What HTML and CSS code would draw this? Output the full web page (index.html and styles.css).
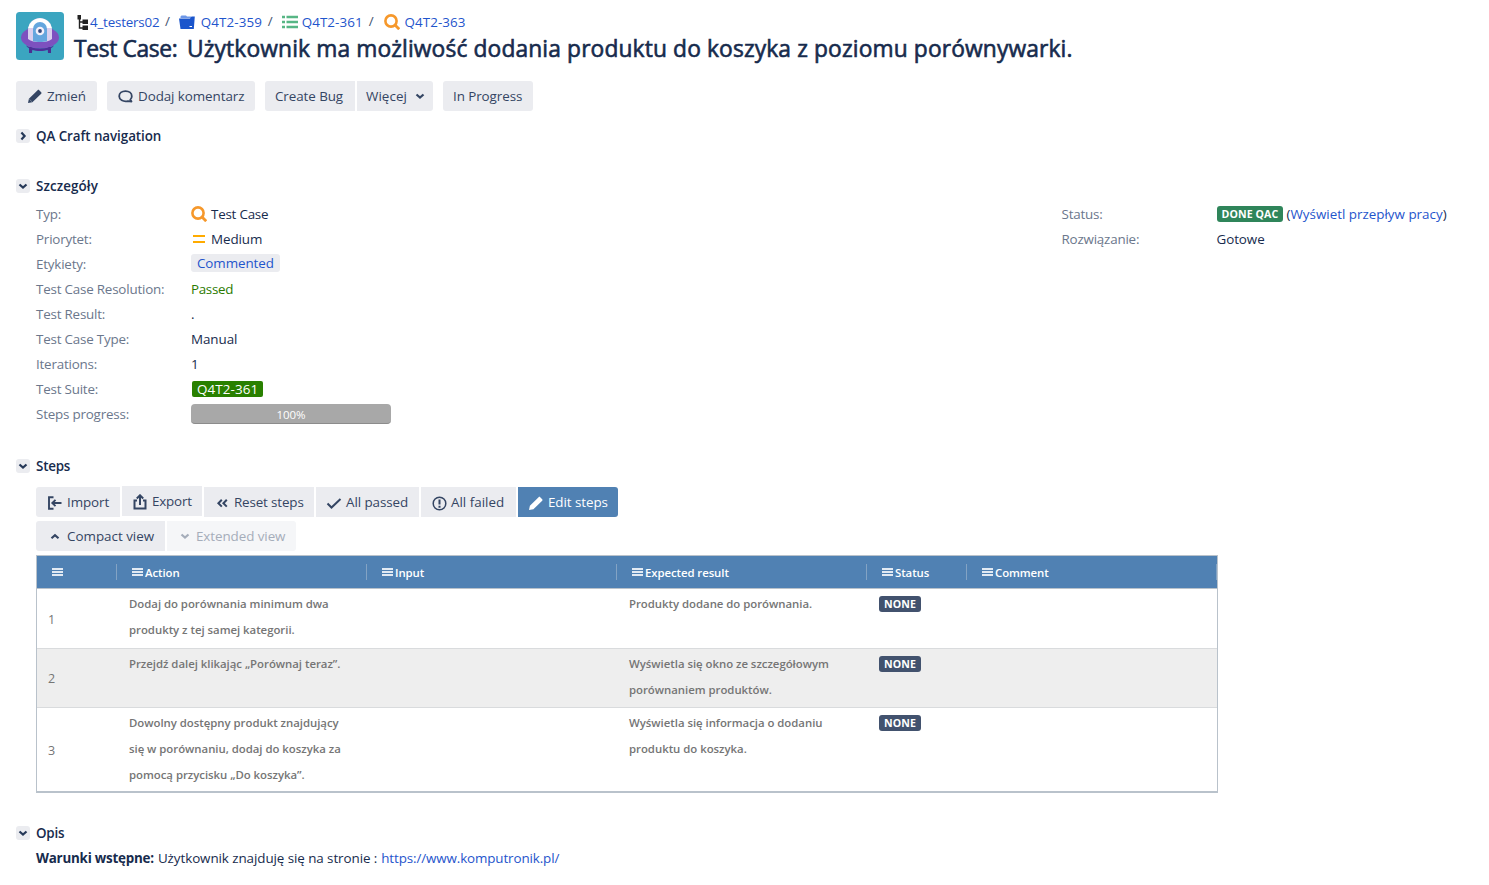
FILE: index.html
```html
<!DOCTYPE html>
<html lang="pl">
<head>
<meta charset="utf-8">
<title>Q4T2-363</title>
<link rel="stylesheet" href="styles.css">
</head>
<body>
<svg class="sprite" width="0" height="0">
  <defs>
    <symbol id="search" viewBox="0 0 16 16"><circle cx="7" cy="7" r="5.600" fill="none" stroke="#f6982b" stroke-width="2.600"/><path d="M11 11l4.200 4.200" stroke="#f6982b" stroke-width="2.800"/></symbol>
    <symbol id="down" viewBox="0 0 14 14"><path d="M3.500 5.500L7 8.600l3.500-3.100" fill="none" stroke="currentColor" stroke-width="2.200"/></symbol>
    <symbol id="pencil" viewBox="0 0 16 16"><path d="M1 15l.9-4.300L10.600 2.200c.5-.5 1.100-.5 1.600 0l2 2c.5.500.5 1.100 0 1.600L5.400 14.200z" fill="currentColor"/><path d="M2.300 11.200l2.800 2.700" stroke="#fff" stroke-opacity=".45" stroke-width=".7"/></symbol>
    <symbol id="bars" viewBox="0 0 11 8"><path d="M0 1h11M0 4h11M0 7h11" stroke="currentColor" stroke-width="2"/></symbol>
  </defs>
</svg>
<header class="head">
  <svg class="avatar" viewBox="0 0 48 48"><rect width="48" height="48" rx="3.500" fill="#3ba5c0"/><path d="M13 35h3.500l-.5 6h-3zM31.500 35H35v6h-3z" fill="#4a2f92"/><ellipse cx="24" cy="25.500" rx="19" ry="11" fill="#7d51bf"/><path d="M10 33.500C13 35.500 18 36.500 24 36.500s11-1 14-3C35 37.500 30 39 24 39s-11-1.500-14-5.500z" fill="#4f2f9a"/><path d="M12 27V18a12 12 0 0 1 24 0v9c-3 2.500-7 3-12 3s-9-.5-12-3z" fill="#d9cfee"/><path d="M12.200 16a12 12 0 0 1 23.600 0z" fill="#fff"/><path d="M17 29.200V17a7 7 0 0 1 14 0v12.200c-4 1-10 1-14 0z" fill="#64a6de"/><circle cx="24" cy="19" r="4.300" fill="#f3f0fa"/><circle cx="24" cy="19" r="1.900" fill="#344a80"/></svg>
  <div class="headtext">
    <nav class="crumbs">
      <svg class="tree" viewBox="0 0 12 16"><path d="M2.500 1v12h6M2.500 7h6" fill="none" stroke="#222" stroke-width="1.400"/><path d="M.5 0H4v4.500H.5zM5.500 4.500H11V9H5.500zM5.500 10.500H11V15H5.500z" fill="#222"/></svg>
      <a class="c1">4_testers02</a><i>/</i>
      <svg class="ic-folder" viewBox="0 0 16 14"><path d="M1.500 3V1.500l1-1H7l1 1h4V3z" fill="#6d97e8"/><path d="M0 3.500h11l1.500-2h3.300L14.800 14H1.500z" fill="#1a55cc"/><path d="M10.500 11.500h2.500" stroke="#fff"/></svg>
      <a class="c2">Q4T2-359</a><i>/</i>
      <svg class="ic-list" viewBox="0 0 16 14"><path d="M0 2h3M0 7h3M0 12h3M4.500 2H16M4.500 7H16M4.500 12H16" stroke="#57b685" stroke-width="2.600"/></svg>
      <a class="c3">Q4T2-361</a><i>/</i>
      <svg class="ic-search"><use href="#search"/></svg>
      <a class="c4">Q4T2-363</a>
    </nav>
    <h1><span class="t1">Test Case:</span><span class="t2">Użytkownik ma możliwość dodania produktu do koszyka z poziomu porównywarki.</span></h1>
  </div>
</header>
<div class="toolbar">
  <button class="btn b-edit"><svg class="i16"><use href="#pencil"/></svg><span>Zmień</span></button>
  <button class="btn b-comment"><svg class="i16" viewBox="0 0 16 16"><path d="M9.800 13.100C5 14 1.200 11.700 1.200 8.200c0-3 2.700-5 6.300-5s6.300 2 6.300 5c0 1.300-.5 2.500-1.500 3.400l1.200 1.900z" fill="none" stroke="currentColor" stroke-width="1.800" stroke-linejoin="round"/></svg><span>Dodaj komentarz</span></button>
  <div class="group"><button class="btn b-bug"><span>Create Bug</span></button><button class="btn b-more"><span>Więcej</span><svg class="i14"><use href="#down"/></svg></button></div>
  <button class="btn b-prog"><span>In Progress</span></button>
</div>
<h2 class="h-nav"><span class="toggle"><svg viewBox="0 0 14 14"><path d="M5.400 3.500L8.600 7l-3.200 3.500" fill="none" stroke="currentColor" stroke-width="2.200"/></svg></span><span>QA Craft navigation</span></h2>
<h2 class="h-details"><span class="toggle"><svg><use href="#down"/></svg></span><span class="wide">Szczegóły</span></h2>
<div class="details">
  <dl class="main">
    <dt>Typ:</dt><dd><svg class="i16 drop"><use href="#search"/></svg><span class="ml tight">Test Case</span></dd>
    <dt>Priorytet:</dt><dd><svg class="i16 drop" viewBox="0 0 16 16"><path d="M2 5h12M2 11h12" stroke="#ffab00" stroke-width="2"/></svg><span class="ml">Medium</span></dd>
    <dt>Etykiety:</dt><dd><a class="label">Commented</a></dd>
    <dt>Test Case Resolution:</dt><dd class="green"><span>Passed</span></dd>
    <dt>Test Result:</dt><dd>.</dd>
    <dt>Test Case Type:</dt><dd>Manual</dd>
    <dt>Iterations:</dt><dd>1</dd>
    <dt>Test Suite:</dt><dd><span class="suite">Q4T2-361</span></dd>
    <dt>Steps progress:</dt><dd><div class="progress">100%</div></dd>
  </dl>
  <dl class="side">
    <dt>Status:</dt><dd><b class="lozenge done">DONE QAC</b><span class="flow">(<a>Wyświetl przepływ pracy</a>)</span></dd>
    <dt>Rozwiązanie:</dt><dd>Gotowe</dd>
  </dl>
</div>
<h2 class="h-steps"><span class="toggle"><svg><use href="#down"/></svg></span><span class="tight">Steps</span></h2>
<div class="stepbar">
  <button class="btn s1"><svg class="i16" viewBox="0 0 16 16"><path d="M6.500 2.200H2v11.600h4.500M5 8h9.500M8.500 4.800L5.300 8l3.200 3.200" fill="none" stroke="currentColor" stroke-width="1.900"/></svg><span>Import</span></button>
  <button class="btn s2"><svg class="i16" viewBox="0 0 16 16"><path d="M5 6.500H2.500v8h11v-8H11M8 11V1.500M4.800 4.500L8 1.300l3.200 3.200" fill="none" stroke="currentColor" stroke-width="2"/></svg><span>Export</span></button>
  <button class="btn s3"><svg class="i16" viewBox="0 0 16 16"><path d="M7.800 4.800L4.400 8.200l3.400 3.400M12.800 4.800L9.400 8.200l3.400 3.400" fill="none" stroke="currentColor" stroke-width="2"/></svg><span>Reset steps</span></button>
  <button class="btn s4"><svg class="i16" viewBox="0 0 16 16"><path d="M1.500 8.500l4 4 9-8.500" fill="none" stroke="currentColor" stroke-width="2"/></svg><span>All passed</span></button>
  <button class="btn s5"><svg class="i16" viewBox="0 0 16 16"><circle cx="8.500" cy="8.500" r="6.300" fill="none" stroke="currentColor" stroke-width="1.500"/><path d="M8.500 4.500v5M8.500 10.700v2" stroke="currentColor" stroke-width="2"/></svg><span>All failed</span></button>
  <button class="btn s6"><svg class="i16"><use href="#pencil"/></svg><span>Edit steps</span></button>
</div>
<div class="viewbar">
  <button class="btn v1"><svg class="i14" viewBox="0 0 14 14"><path d="M3.500 9.200L7 6.100l3.500 3.100" fill="none" stroke="currentColor" stroke-width="2.200"/></svg><span>Compact view</span></button>
  <button class="btn v2"><svg class="i14"><use href="#down"/></svg><span>Extended view</span></button>
</div>
<div class="grid">
  <div class="row ghead">
    <div><svg><use href="#bars"/></svg></div>
    <div><svg><use href="#bars"/></svg><span>Action</span></div>
    <div><svg><use href="#bars"/></svg><span>Input</span></div>
    <div><svg><use href="#bars"/></svg><span>Expected result</span></div>
    <div><svg><use href="#bars"/></svg><span>Status</span></div>
    <div><svg><use href="#bars"/></svg><span>Comment</span></div>
  </div>
  <div class="row r1"><div class="num">1</div><div>Dodaj do porównania minimum dwa<br>produkty z tej samej kategorii.</div><div></div><div>Produkty dodane do porównania.</div><div><b class="lozenge none">NONE</b></div><div></div></div>
  <div class="row r2"><div class="num">2</div><div>Przejdź dalej klikając „Porównaj teraz”.</div><div></div><div>Wyświetla się okno ze szczegółowym<br>porównaniem produktów.</div><div><b class="lozenge none">NONE</b></div><div></div></div>
  <div class="row r3"><div class="num">3</div><div>Dowolny dostępny produkt znajdujący<br>się w porównaniu, dodaj do koszyka za<br>pomocą przycisku „Do koszyka”.</div><div></div><div>Wyświetla się informacja o dodaniu<br>produktu do koszyka.</div><div><b class="lozenge none">NONE</b></div><div></div></div>
</div>
<h2 class="h-desc"><span class="toggle"><svg><use href="#down"/></svg></span><span class="tight">Opis</span></h2>
<p class="desc"><b>Warunki wstępne:</b><span>Użytkownik znajduję się na stronie :</span><a>https://www.komputronik.pl/</a></p>
</body>
</html>
```
FILE: styles.css
```css
* { box-sizing: border-box; }
body { margin: 0; padding: 12px 16px 0; height: 885px; overflow: hidden; background: #fff; color: #172b4d; font: 13.4px/20px "Open Sans", "Noto Sans", sans-serif; letter-spacing: -0.07px; }
h1, h2, dl, dd, p { margin: 0; }
a { color: #1f55cc; white-space: nowrap; }
span, b { white-space: nowrap; }
svg { display: block; flex: none; }
.sprite { position: absolute; }
.tight { letter-spacing: -0.22px; }
.wide { letter-spacing: 0.1px; }

.head { display: flex; height: 48px; }
.avatar { width: 48px; height: 48px; }
.headtext { margin-left: 12px; }
.crumbs { display: flex; align-items: center; height: 20px; }
.crumbs i { font-style: normal; color: #42526e; margin: -3px 0 0 5px; }
.tree { width: 12px; height: 16px; margin: 2px 1px 0 1px; }
.c1 { width: 70px; letter-spacing: -0.2px; }
.c2, .c3, .c4 { width: 62px; letter-spacing: 0.08px; }
.ic-folder { width: 16px; height: 14px; margin: 0 6px 0 9px; }
.ic-list { width: 16px; height: 14px; margin: 0 4px 0 9px; }
.ic-search { width: 16px; height: 16px; margin: 0 5px 0 10px; }
h1 { display: flex; margin-top: 1px; font-size: 22.8px; font-weight: 400; line-height: 31px; -webkit-text-stroke: 0.6px #172b4d; letter-spacing: 0.12px; }
.t1 { width: 113px; margin-left: -2px; letter-spacing: -0.35px; }

.btn { display: flex; align-items: center; height: 30px; padding: 0; border: 0; border-radius: 3px; background: #ebecf0; color: #344563; font: inherit; letter-spacing: inherit; }
.i16 { width: 16px; height: 16px; }
.drop { margin-top: 1px; }
.i14 { width: 14px; height: 14px; }
.toolbar { display: flex; gap: 10px; margin-top: 21px; }
.group { display: flex; gap: 2px; }
.b-edit { width: 81px; padding-left: 11px; gap: 4px; }
.b-comment { width: 148px; padding-left: 11px; gap: 4px; }
.b-bug { width: 90px; padding-left: 10px; border-radius: 3px 0 0 3px; }
.b-more { width: 76px; padding-left: 9px; gap: 6px; border-radius: 0 3px 3px 0; letter-spacing: 0.05px; }
.b-prog { width: 90px; padding-left: 10px; }

h2 { display: flex; align-items: center; gap: 6px; height: 20px; font-size: 13.4px; font-weight: 600; }
.toggle { width: 14px; height: 14px; border-radius: 3px; background: #ebecf0; color: #253858; }
.toggle svg { width: 14px; height: 14px; }
.h-nav { margin-top: 15px; }
.h-details { margin-top: 30px; }

.details { display: flex; padding: 5px 0 0 20px; height: 231px; }
.details dl { display: grid; grid-auto-rows: 25px; align-items: center; align-content: start; flex: none; }
.details .main { grid-template-columns: 155px 870px; }
.details .side { grid-template-columns: 155px 240px; margin-left: 0.5px; }
dt { color: #6b778c; letter-spacing: -0.2px; }
dd { display: flex; align-items: center; }
.ml { margin-left: 4px; }
.label { display: block; width: 89px; height: 18px; margin-top: -2px; padding-left: 6px; border-radius: 3px; background: #ebecf0; line-height: 18px; }
.green { color: #2a7a00; letter-spacing: -0.33px; }
.suite { width: 71px; height: 16px; margin-left: 1px; padding-left: 5px; border-radius: 2px; background: #298000; color: #fff; line-height: 16px; letter-spacing: 0.1px; }
.progress { width: 200px; height: 20px; border-radius: 4px; border-bottom: 1px solid #8c8c8c; background: #a8a8a8; color: #fff; font-size: 11.5px; text-align: center; line-height: 21px; }
.lozenge { display: block; height: 16px; padding-left: 5px; border-radius: 3px; color: #fff; font-size: 10.6px; font-weight: 700; line-height: 16px; letter-spacing: 0.1px; }
.done { width: 66px; margin-top: 1px; background: #2f855a; }
.flow { margin-left: 4px; letter-spacing: 0; }

.h-steps { margin-top: 29px; }
.stepbar { display: flex; gap: 2px; padding: 0 0 0 20px; margin-top: 11px; }
.stepbar .btn, .viewbar .btn { border-radius: 0; }
.stepbar .s1, .viewbar .v1 { border-radius: 3px 0 0 3px; }
.stepbar .s6, .viewbar .v2 { border-radius: 0 3px 3px 0; }
.stepbar .i16 { margin-top: 1px; }
.s1 { width: 84px; padding-left: 11px; gap: 4px; }
.s2 { width: 80px; padding-left: 10px; gap: 4px; margin-top: -1px; letter-spacing: -0.2px; }
.s3 { width: 110px; padding-left: 10px; gap: 4px; letter-spacing: -0.14px; }
.s4 { width: 103px; padding-left: 10px; gap: 4px; }
.s5 { width: 95px; padding-left: 10px; gap: 4px; letter-spacing: 0; }
.s6 { width: 100px; padding-left: 10px; gap: 4px; background: #5081b3; color: #fff; }
.viewbar { display: flex; gap: 2px; padding-left: 20px; margin-top: 4px; }
.v1 { width: 129px; padding-left: 12px; gap: 5px; letter-spacing: 0; }
.v2 { width: 129px; padding-left: 11px; gap: 4px; background: #f5f6f8; color: #a5adba; }

.grid { width: 1182px; height: 238px; margin: 4px 0 0 20px; border: 1px solid #b9c2cb; border-bottom-width: 2px; color: #757575; font-size: 11.4px; font-weight: 600; letter-spacing: -0.03px; }
.row { display: grid; grid-template-columns: 80px 250px 250px 250px 100px 250px; }
.row > div { line-height: 26px; padding: 2px 0 0 12px; }
.ghead { height: 33px; align-items: center; border-bottom: 1px solid #b9c2cb; background: #5081b3; color: #fff; }
.ghead > div { display: flex; align-items: center; gap: 2px; height: 16px; padding: 0 0 0 15px; border-right: 1px solid #83a3c4; }
.ghead span { padding-top: 1px; letter-spacing: -0.08px; }
.ghead svg { width: 11px; height: 8px; color: #e2eaf3; }
.r1 { height: 60px; border-bottom: 1px solid #d9dbdd; }
.r2 { height: 59px; border-bottom: 1px solid #d9dbdd; background: #eee; }
.r3 { height: 83px; }
.row > .num { align-self: center; padding: 2px 0 0 11px; font-size: 12.5px; font-weight: 400; }
.none { width: 42px; margin-top: 5px; background: #42526e; }

.h-desc { margin-top: 30px; }
.desc { display: flex; gap: 4px; margin: 5px 0 0 20px; }
.desc b { letter-spacing: -0.22px; }
.desc a { letter-spacing: -0.12px; }
```
